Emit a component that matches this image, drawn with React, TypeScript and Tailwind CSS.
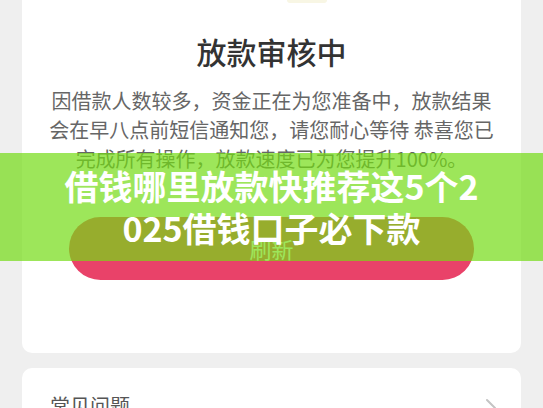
const font = "font-['Noto_Sans_CJK_SC','Noto_Sans',sans-serif]";

function Chevron() {
  return (
    <svg width="12" height="20" viewBox="0 0 12 20" fill="none">
      <path d="M2 2l8 8-8 8" stroke="#c4c4c4" strokeWidth="2" strokeLinecap="round" strokeLinejoin="round" />
    </svg>
  );
}

export default function App() {
  return (
    <div className={`relative h-[408px] overflow-hidden bg-[#efefef] ${font}`}>
      {/* status card */}
      <div className="mx-[22px] rounded-b-[10px] bg-white px-[26px] pb-[73px]">
        <div className="ml-[239px] h-[3px] w-[40px] rounded-b-full bg-[#f8f6e4]" />
        <h1 className="mt-[28px] h-[40px] text-center text-[30px] leading-[40px] font-medium text-[#333]">
          放款审核中
        </h1>
        <p className="mt-[15px] text-center text-[20px] leading-[29px] text-[#666]">
          因借款人数较多，资金正在为您准备中，放款结果
          <br />
          会在早八点前短信通知您，请您耐心等待 恭喜您已
          <br />
          完成所有操作，放款速度已为您提升100%。
        </p>
        <button className="mx-[21px] mt-[44px] flex h-[63px] w-[405px] items-center justify-center rounded-full bg-[#e94269] text-[22px] text-white">
          刷新
        </button>
      </div>

      {/* faq card */}
      <div className="mx-[22px] mt-[15px] flex items-start justify-between rounded-[10px] bg-white pl-[28px] pr-[24px] pt-[24px] pb-[30px]">
        <span className="text-[20px] leading-[28px] text-[#555]">常见问题</span>
        <div className="pt-[6px]">
          <Chevron />
        </div>
      </div>

      {/* headline banner */}
      <div className="absolute left-0 right-0 top-[153px] flex h-[108px] items-center justify-center bg-[rgba(115,220,20,0.7)]">
        <div className="text-center text-[34px] leading-[42px] font-bold text-white">
          借钱哪里放款快推荐这5个2
          <br />
          025借钱口子必下款
        </div>
      </div>
    </div>
  );
}
